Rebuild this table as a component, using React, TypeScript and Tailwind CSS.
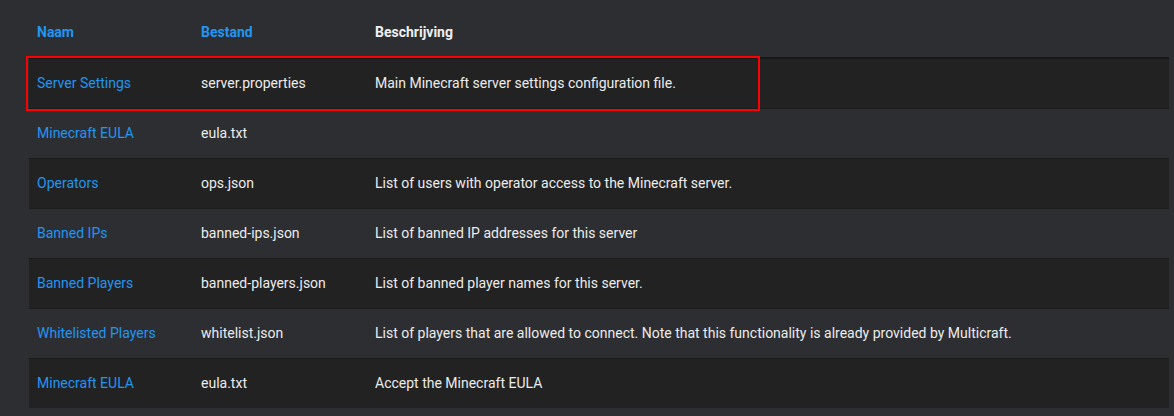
const rows = [
  { name: 'Server Settings', file: 'server.properties', desc: 'Main Minecraft server settings configuration file.' },
  { name: 'Minecraft EULA', file: 'eula.txt', desc: '' },
  { name: 'Operators', file: 'ops.json', desc: 'List of users with operator access to the Minecraft server.' },
  { name: 'Banned IPs', file: 'banned-ips.json', desc: 'List of banned IP addresses for this server' },
  { name: 'Banned Players', file: 'banned-players.json', desc: 'List of banned player names for this server.' },
  { name: 'Whitelisted Players', file: 'whitelist.json', desc: 'List of players that are allowed to connect. Note that this functionality is already provided by Multicraft.' },
  { name: 'Minecraft EULA', file: 'eula.txt', desc: 'Accept the Minecraft EULA' },
]

export default function App() {
  return (
    <div className="w-[1174px] h-[416px] bg-[#2d2e31] pl-[29px] pr-[5px] text-[14px] font-['Roboto',sans-serif] overflow-hidden">
      <div className="relative">
        <table className="w-full border-collapse">
          <thead>
            <tr className="h-[58px] border-b-2 border-[#161718] text-left">
              <th className="w-[164px] pl-2 pt-2 font-bold text-[#2196f3]">Naam</th>
              <th className="w-[174px] pl-2 pt-2 font-bold text-[#2196f3]">Bestand</th>
              <th className="pl-2 pt-2 font-bold text-[#f0f0f0]">Beschrijving</th>
            </tr>
          </thead>
          <tbody>
            {rows.map((r, i) => (
              <tr
                key={i}
                className={`h-[50px] border-b border-[#1b1b1c] last:border-b-0 ${i % 2 === 0 ? 'bg-[#222222]' : 'bg-[#2d2e31]'}`}
              >
                <td className="pl-2 text-[#2196f3]">{r.name}</td>
                <td className="pl-2 text-[#ececec]">{r.file}</td>
                <td className="pl-2 text-[#ececec]">{r.desc}</td>
              </tr>
            ))}
          </tbody>
        </table>
        {/* highlight around the first row */}
        <div className="absolute left-[-3px] top-[56px] w-[734px] h-[55px] border-2 border-[#ff0000] pointer-events-none" />
      </div>
    </div>
  )
}
